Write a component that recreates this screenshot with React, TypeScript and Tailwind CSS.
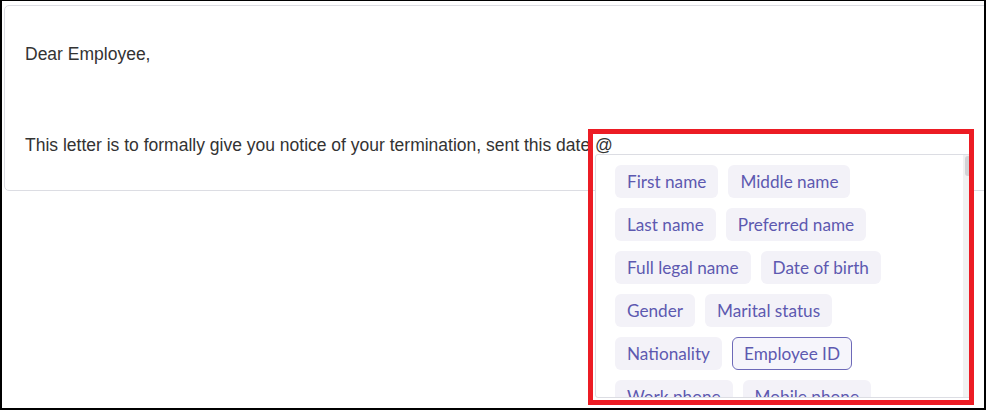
import React from 'react'

const tags = [
  ['First name', 'Middle name'],
  ['Last name', 'Preferred name'],
  ['Full legal name', 'Date of birth'],
  ['Gender', 'Marital status'],
  ['Nationality', 'Employee ID'],
  ['Work phone', 'Mobile phone'],
]

function Tag({ label, active }: { label: string; active?: boolean }) {
  return (
    <span
      className={
        'inline-flex h-[33px] items-center rounded-md px-[11px] text-[17.2px] leading-none text-[#5d59b0] ' +
        (active ? 'border border-[#6d69b8] bg-[#f6f5fb]' : 'border border-transparent bg-[#f3f2f8]')
      }
    >
      {label}
    </span>
  )
}

export default function App() {
  return (
    <div className="relative h-[410px] w-[986px] overflow-hidden border-t border-l-2 border-r-2 border-b-2 border-black bg-white font-['Liberation_Sans',Arial,sans-serif]">
      {/* letter editor */}
      <div className="ml-[2px] mt-[4px] mr-[-20px] h-[186px] rounded-[5px] border border-[#dcdde3] px-[20px] pt-[35px] text-[17.5px] text-[#333]">
        <p className="leading-[26px]">Dear Employee,</p>
        <p className="mt-[65px] leading-[26px]">
          This letter is to formally give you notice of your termination, sent this date @
        </p>
      </div>

      {/* mention picker */}
      <div className="absolute left-[593px] top-[153px] h-[244px] w-[378px] overflow-hidden rounded-[3px] border border-[#dcdde3] bg-white font-['Lato',sans-serif]">
        <div className="flex flex-col gap-[10px] pl-[19px] pt-[10px]">
          {tags.map((row, i) => (
            <div key={i} className="flex gap-[10px]">
              {row.map(t => (
                <Tag key={t} label={t} active={t === 'Employee ID'} />
              ))}
            </div>
          ))}
        </div>
        <div className="absolute right-0 top-0 h-full w-[9px] bg-[#f1f1f1]">
          <div className="mx-auto mt-[1px] h-[20px] w-[6px] rounded-full bg-[#d3d3d6]" />
        </div>
      </div>

      {/* highlight frame */}
      <div className="pointer-events-none absolute left-[586px] top-[128px] h-[276px] w-[386px] border-[5px] border-[#ec1c24]" />
    </div>
  )
}
